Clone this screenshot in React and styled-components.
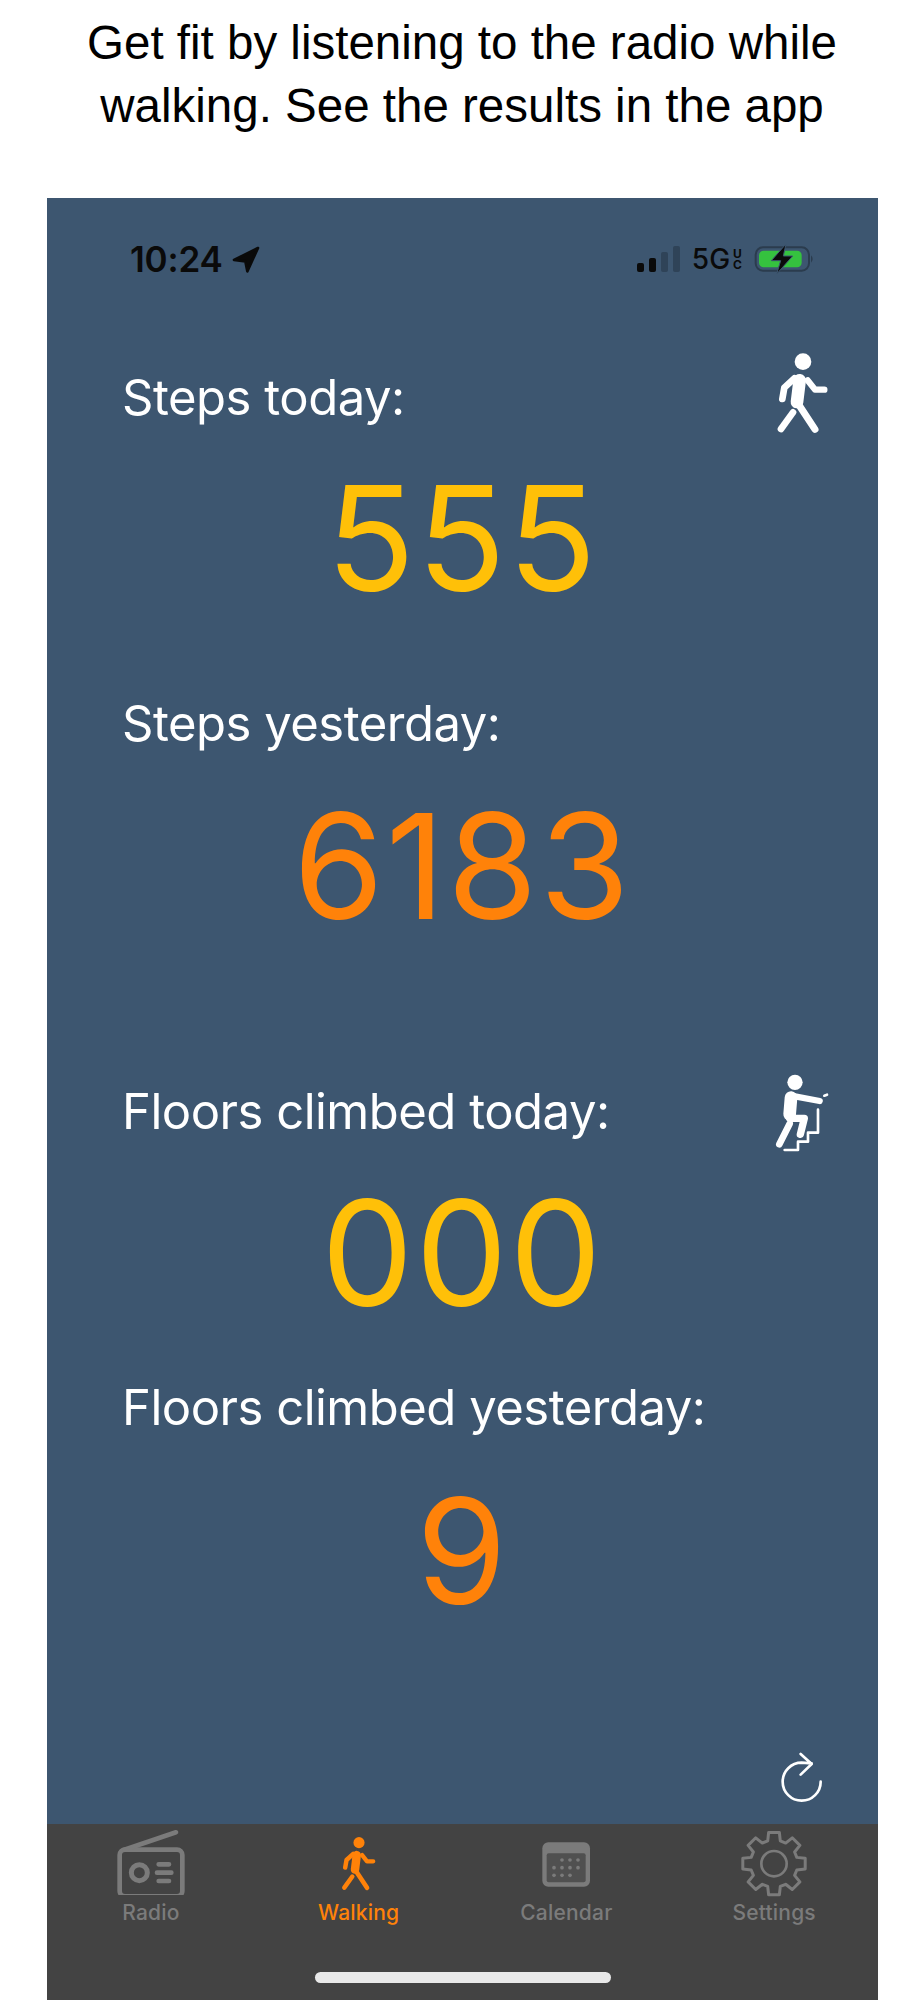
import React from "react";
import styled, { createGlobalStyle } from "styled-components";

const GlobalStyle = createGlobalStyle`
    html, body {
        margin: 0;
        padding: 0;
        background: #fff;
    }
`;

const Page = styled.div`
    width: 924px;
    height: 2000px;
    overflow: hidden;
    display: flex;
    flex-direction: column;
`;

const Title = styled.h1`
    height: 198px;
    margin: 0;
    padding-top: 11px;
    box-sizing: border-box;
    font-family: "Liberation Sans", Arial, sans-serif;
    font-weight: 400;
    font-size: 47.5px;
    line-height: 63px;
    color: #000;
    text-align: center;
`;

const Phone = styled.div`
    flex: 1;
    margin: 0 46px 0 47px;
    background: #3d5670;
    display: flex;
    flex-direction: column;
`;

const StatusBar = styled.div`
    height: 50px;
    margin-top: 36px;
    padding: 0 62px 0 83px;
    display: flex;
    align-items: center;
    justify-content: space-between;
`;

const Time = styled.div`
    display: flex;
    align-items: center;
    gap: 9px;
    font-family: Inter, sans-serif;
    font-weight: 600;
    font-size: 35px;
    letter-spacing: -0.2px;
    color: #0a0a0a;
`;

const Network = styled.div`
    display: flex;
    align-items: center;
    gap: 12px;
`;

const Bars = styled.div`
    display: flex;
    align-items: flex-end;
    gap: 5px;
    height: 26px;
`;

const Bar = styled.span`
    width: 7px;
    height: ${({ $h }) => $h}px;
    border-radius: 2px;
    background: ${({ $off }) => ($off ? "#2f4358" : "#0a0a0a")};
`;

const Carrier = styled.div`
    display: flex;
    align-items: center;
    gap: 3px;
    font-family: Inter, sans-serif;
    font-weight: 500;
    font-size: 28px;
    color: #0a0a0a;
`;

const CarrierSub = styled.span`
    display: flex;
    flex-direction: column;
    font-size: 12px;
    font-weight: 700;
    line-height: 11px;
`;

const Content = styled.div`
    flex: 1;
    display: flex;
    flex-direction: column;
    padding: 0 17px 0 75px;
`;

const LabelRow = styled.div`
    height: 90px;
    margin-top: ${({ $top }) => $top}px;
    display: flex;
    align-items: center;
    justify-content: space-between;
`;

const Label = styled.div`
    font-family: Inter, sans-serif;
    font-weight: 370;
    font-size: 49px;
    letter-spacing: -0.5px;
    color: #fff;
`;

const Value = styled.div`
    height: 140px;
    margin: ${({ $top }) => $top}px -17px 0 -75px;
    display: flex;
    align-items: center;
    justify-content: center;
    font-family: Inter, sans-serif;
    font-weight: 370;
    font-size: 146px;
    letter-spacing: 2px;
    color: ${({ $tone }) => ($tone === "gold" ? "#ffc008" : "#ff8209")};
`;

const RefreshRow = styled.div`
    margin-top: auto;
    padding: 0 11px 5px 0;
    display: flex;
    justify-content: flex-end;
`;

const TabBar = styled.div`
    height: 176px;
    background: #434343;
    position: relative;
    display: grid;
    grid-template-columns: repeat(4, 1fr);
    align-items: start;
    padding-top: 1px;
    box-sizing: border-box;
`;

const Tab = styled.div`
    display: flex;
    flex-direction: column;
    align-items: center;
    font-family: Inter, sans-serif;
    font-weight: 500;
    font-size: 21px;
    letter-spacing: 0.2px;
    line-height: 24px;
    color: ${({ $active }) => ($active ? "#ff8209" : "#7b7b7b")};

    svg {
        display: block;
        margin-bottom: 6px;
    }
`;

const HomeBar = styled.div`
    position: absolute;
    left: 268px;
    bottom: 17px;
    width: 296px;
    height: 11px;
    border-radius: 6px;
    background: #e9e9e9;
`;

const LocationArrow = () => (
    <svg width="28" height="27" viewBox="0 0 84 81">
        <path
            d="M78 6 L6 42 L40 46 L46 76 Z"
            fill="#0a0a0a"
            stroke="#0a0a0a"
            strokeWidth="8"
            strokeLinejoin="round"
        />
    </svg>
);

const Battery = () => (
    <svg width="62" height="30" viewBox="0 0 186 90">
        <rect x="5" y="10" width="160" height="70" rx="22" fill="none" stroke="#2b3c4e" strokeWidth="6" />
        <rect x="15" y="20" width="128" height="50" rx="14" fill="#35c23f" />
        <path d="M171 34 Q181 45 171 56 Z" fill="#2b3c4e" />
        <path d="M96 0 L52 50 L80 50 L68 90 L116 36 L88 36 Z" fill="#0a0a0a" stroke="#3d5670" strokeWidth="3" />
    </svg>
);

// same figure is used for the header icon and the active tab
const WalkerFigure = ({ color }) => (
    <g fill="none" stroke={color} strokeLinecap="round" strokeLinejoin="round">
        <circle cx="186" cy="74" r="25" fill={color} stroke="none" />
        <path d="M176 130 L168 195" strokeWidth="38" />
        <path d="M160 124 L130 152 L124 186" strokeWidth="20" />
        <path d="M200 130 L222 158 L250 158" strokeWidth="19" />
        <path d="M170 198 L222 277" strokeWidth="21" />
        <path d="M156 226 L120 276" strokeWidth="20" />
    </g>
);

const WalkIcon = () => (
    <svg width="120" height="120" viewBox="0 0 360 360">
        <WalkerFigure color="#fff" />
    </svg>
);

const ClimbIcon = () => (
    <svg width="120" height="120" viewBox="0 0 360 360">
        <g fill="none" stroke="#fff" strokeLinecap="round" strokeLinejoin="round">
            <circle cx="162" cy="94" r="23" fill="#fff" stroke="none" />
            <path d="M150 140 L146 190" strokeWidth="38" />
            <path d="M150 134 L236 150" strokeWidth="19" />
            <path d="M146 202 L190 202 L178 250" strokeWidth="22" />
            <path d="M146 218 L115 280" strokeWidth="20" />
            <path d="M131 297 L171 297 L171 272 L201 272 L201 245 L231 245 L231 176" strokeWidth="8" />
            <path d="M250 134 L258 131" strokeWidth="8" />
        </g>
    </svg>
);

const RefreshIcon = () => (
    <svg width="100" height="90" viewBox="0 0 300 270">
        <path
            d="M212 158 A57 57 0 1 1 155 101 L185 103 M152 75 L185 105 L152 137"
            fill="none"
            stroke="#fff"
            strokeWidth="8"
            strokeLinecap="round"
            strokeLinejoin="round"
        />
    </svg>
);

const RadioIcon = () => (
    <svg width="110" height="70" viewBox="-45 0 330 210">
        <g fill="none" stroke="#7b7b7b" strokeLinecap="round">
            <rect x="26" y="74" width="188" height="140" rx="16" strokeWidth="14" />
            <path d="M40 74 L195 22" strokeWidth="14" />
            <circle cx="85" cy="143" r="24" strokeWidth="15" />
            <path d="M143 118 H174 M138 143 H181 M143 168 H174" strokeWidth="14" />
        </g>
    </svg>
);

const calendarDots = [
    [141, 105], [165, 105], [189, 105],
    [117, 128], [141, 128], [165, 128], [189, 128],
    [117, 151], [141, 151], [165, 151],
];

const CalendarIcon = () => (
    <svg width="110" height="70" viewBox="-12 0 330 210">
        <rect x="82" y="52" width="143" height="133" rx="18" fill="#7b7b7b" />
        <rect x="95" y="85" width="117" height="87" rx="6" fill="#505050" />
        {calendarDots.map(([x, y]) => (
            <circle key={`${x}-${y}`} cx={x} cy={y} r="5.5" fill="#7b7b7b" />
        ))}
    </svg>
);

// gear outline with 8 teeth, worked out from the centre
const gearPath = () => {
    const cx = 162;
    const cy = 116;
    const pts = [];
    for (let i = 0; i < 8; i++) {
        const a = (i * Math.PI) / 4 - Math.PI / 2;
        [
            [71, -0.27],
            [95, -0.17],
            [95, 0.17],
            [71, 0.27],
        ].forEach(([r, d]) => {
            pts.push([cx + r * Math.cos(a + d), cy + r * Math.sin(a + d)]);
        });
    }
    return "M" + pts.map((p) => p.map((n) => n.toFixed(1)).join(" ")).join(" L") + " Z";
};

const SettingsIcon = () => (
    <svg width="110" height="70" viewBox="-3 0 330 210" overflow="visible">
        <path d={gearPath()} fill="none" stroke="#7b7b7b" strokeWidth="9" strokeLinejoin="round" />
        <circle cx="162" cy="116" r="38" fill="none" stroke="#7b7b7b" strokeWidth="8" />
    </svg>
);

const App = () => {
    return (
        <Page>
            <GlobalStyle />
            <Title>
                Get fit by listening to the radio while
                <br />
                walking. See the results in the app
            </Title>
            <Phone>
                <StatusBar>
                    <Time>
                        10:24
                        <LocationArrow />
                    </Time>
                    <Network>
                        <Bars>
                            <Bar $h={9} />
                            <Bar $h={14} />
                            <Bar $h={20} $off />
                            <Bar $h={26} $off />
                        </Bars>
                        <Carrier>
                            5G
                            <CarrierSub>
                                <span>U</span>
                                <span>C</span>
                            </CarrierSub>
                        </Carrier>
                        <Battery />
                    </Network>
                </StatusBar>
                <Content>
                    <LabelRow $top={68}>
                        <Label>Steps today:</Label>
                        <WalkIcon />
                    </LabelRow>
                    <Value $tone="gold" $top={26}>555</Value>
                    <LabelRow $top={70}>
                        <Label>Steps yesterday:</Label>
                    </LabelRow>
                    <Value $tone="orange" $top={28}>6183</Value>
                    <LabelRow $top={130}>
                        <Label>Floors climbed today:</Label>
                        <ClimbIcon />
                    </LabelRow>
                    <Value $tone="gold" $top={27}>000</Value>
                    <LabelRow $top={39}>
                        <Label>Floors climbed yesterday:</Label>
                    </LabelRow>
                    <Value $tone="orange" $top={29}>9</Value>
                    <RefreshRow>
                        <RefreshIcon />
                    </RefreshRow>
                </Content>
                <TabBar>
                    <Tab>
                        <RadioIcon />
                        Radio
                    </Tab>
                    <Tab $active>
                        <svg width="110" height="70" viewBox="-61 -5 494 314">
                            <WalkerFigure color="#ff8209" />
                        </svg>
                        Walking
                    </Tab>
                    <Tab>
                        <CalendarIcon />
                        Calendar
                    </Tab>
                    <Tab>
                        <SettingsIcon />
                        Settings
                    </Tab>
                    <HomeBar />
                </TabBar>
            </Phone>
        </Page>
    );
};

export default App;
